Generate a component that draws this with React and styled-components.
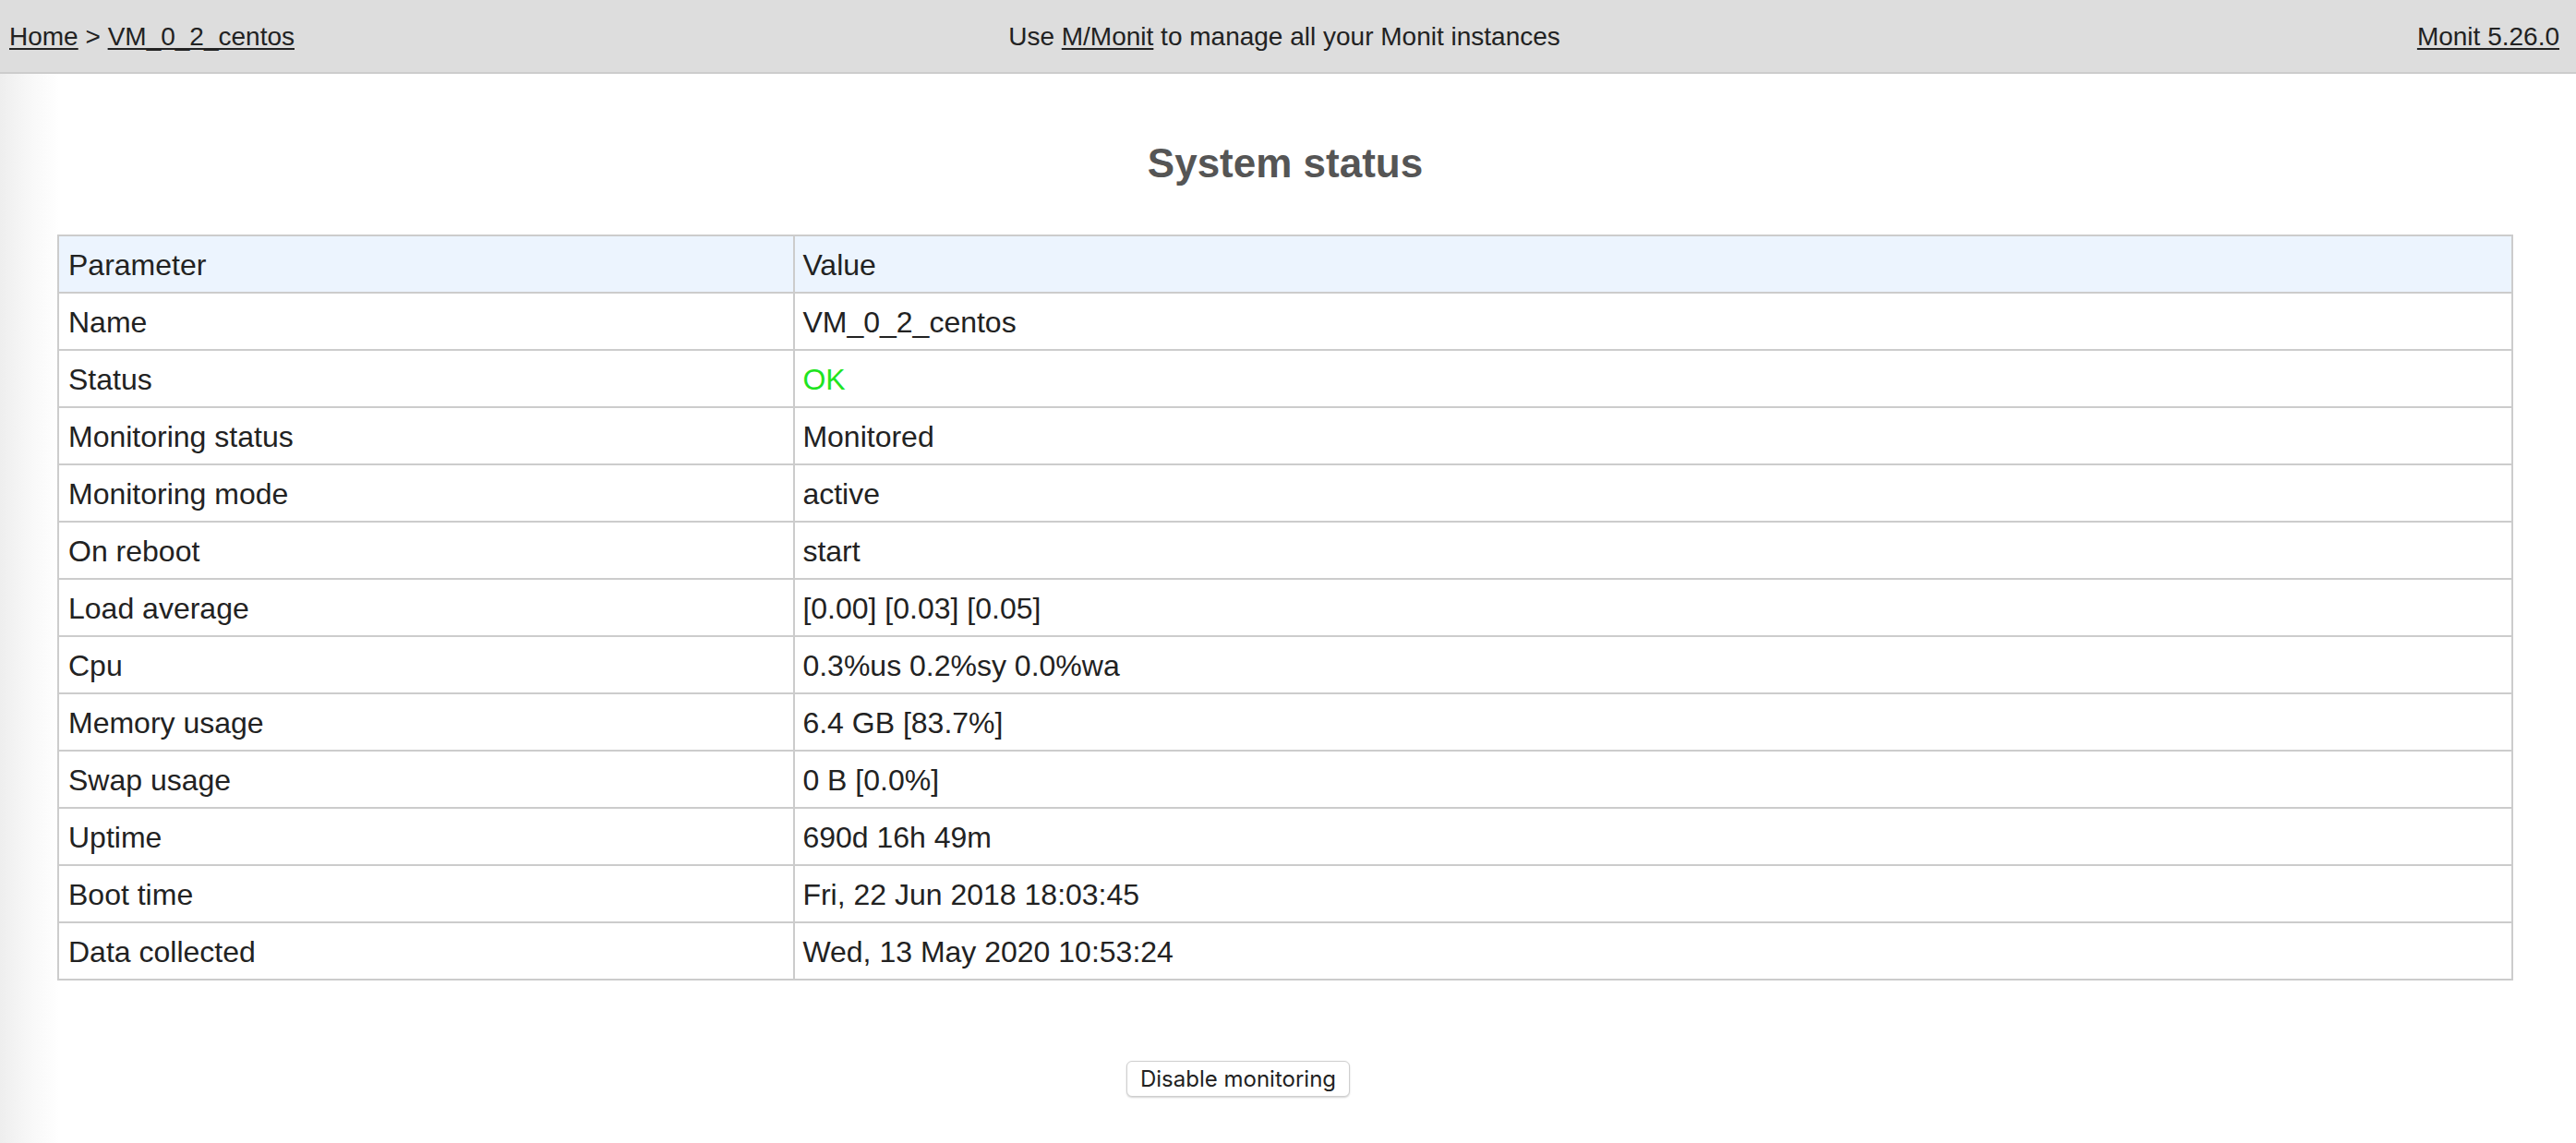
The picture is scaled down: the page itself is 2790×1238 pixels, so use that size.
import React from "react";
import styled, { createGlobalStyle } from "styled-components";

const GlobalStyle = createGlobalStyle`
  html, body {
    margin: 0;
    padding: 0;
  }
  body {
    min-height: 1238px;
    background: linear-gradient(to right, #eeeeee 0px, #f7f7f7 30px, #ffffff 64px);
    font-family: "Liberation Sans", Arial, Helvetica, sans-serif;
    color: #222222;
  }
`;

const Header = styled.header`
  display: grid;
  grid-template-columns: 1fr auto 1fr;
  align-items: center;
  height: 80px;
  padding: 2px 18px 0 10px;
  box-sizing: border-box;
  background: #dddddd;
  border-bottom: 2px solid #cccccc;
  font-size: 28px;
  color: #222222;
`;

const Crumbs = styled.div`
  justify-self: start;
  white-space: nowrap;
`;

const Middle = styled.div`
  justify-self: center;
  white-space: nowrap;
`;

const Version = styled.div`
  justify-self: end;
  white-space: nowrap;
`;

const Link = styled.a`
  color: #222222;
  text-decoration: underline;
  text-underline-offset: 3px;
  text-decoration-thickness: 2px;
`;

const Main = styled.main`
  padding: 0 68px 0 62px;
`;

const Title = styled.h1`
  margin: 72px 0 52px;
  text-align: center;
  font-size: 44px;
  line-height: 50px;
  font-weight: bold;
  color: #555555;
`;

const Table = styled.table`
  width: 100%;
  border-collapse: collapse;
  border: 2px solid #cccccc;
  font-size: 32px;
  line-height: 34px;
`;

const HeadRow = styled.tr`
  background: #ecf4fe;
`;

const Cell = styled.td`
  border: 2px solid #cccccc;
  padding: 14px 10px 12px ${(p) => (p.$first ? "10px" : "8px")};
  text-align: left;
  font-weight: normal;
  vertical-align: middle;
  width: ${(p) => (p.$first ? "30%" : "auto")};
  color: ${(p) => (p.$ok ? "#1fe41f" : "#222222")};
`;

const HeadCell = styled(Cell).attrs({ as: "th" })``;

const Actions = styled.div`
  display: flex;
  justify-content: center;
  padding: 87px 108px 40px 0;
`;

const Button = styled.button`
  height: 39px;
  padding: 0 14px;
  box-sizing: border-box;
  border: 1px solid #cfcfcf;
  border-radius: 6px;
  background: #ffffff;
  box-shadow: 0 1px 2px rgba(0, 0, 0, 0.18);
  font-family: Inter, "Liberation Sans", sans-serif;
  font-size: 24px;
  color: #222222;
  cursor: pointer;
`;

const rows = [
  ["Name", "VM_0_2_centos"],
  ["Status", "OK", true],
  ["Monitoring status", "Monitored"],
  ["Monitoring mode", "active"],
  ["On reboot", "start"],
  ["Load average", "[0.00] [0.03] [0.05]"],
  ["Cpu", "0.3%us 0.2%sy 0.0%wa"],
  ["Memory usage", "6.4 GB [83.7%]"],
  ["Swap usage", "0 B [0.0%]"],
  ["Uptime", "690d 16h 49m"],
  ["Boot time", "Fri, 22 Jun 2018 18:03:45"],
  ["Data collected", "Wed, 13 May 2020 10:53:24"],
];

export default function App() {
  return (
    <>
      <GlobalStyle />
      <Header>
        <Crumbs>
          <Link href="#">Home</Link> &gt; <Link href="#">VM_0_2_centos</Link>
        </Crumbs>
        <Middle>
          Use <Link href="#">M/Monit</Link> to manage all your Monit instances
        </Middle>
        <Version>
          <Link href="#">Monit 5.26.0</Link>
        </Version>
      </Header>
      <Main>
        <Title>System status</Title>
        <Table>
          <thead>
            <HeadRow>
              <HeadCell $first>Parameter</HeadCell>
              <HeadCell>Value</HeadCell>
            </HeadRow>
          </thead>
          <tbody>
            {rows.map(([k, v, ok]) => (
              <tr key={k}>
                <Cell $first>{k}</Cell>
                <Cell $ok={ok}>{v}</Cell>
              </tr>
            ))}
          </tbody>
        </Table>
      </Main>
      <Actions>
        <Button type="button">Disable monitoring</Button>
      </Actions>
    </>
  );
}
